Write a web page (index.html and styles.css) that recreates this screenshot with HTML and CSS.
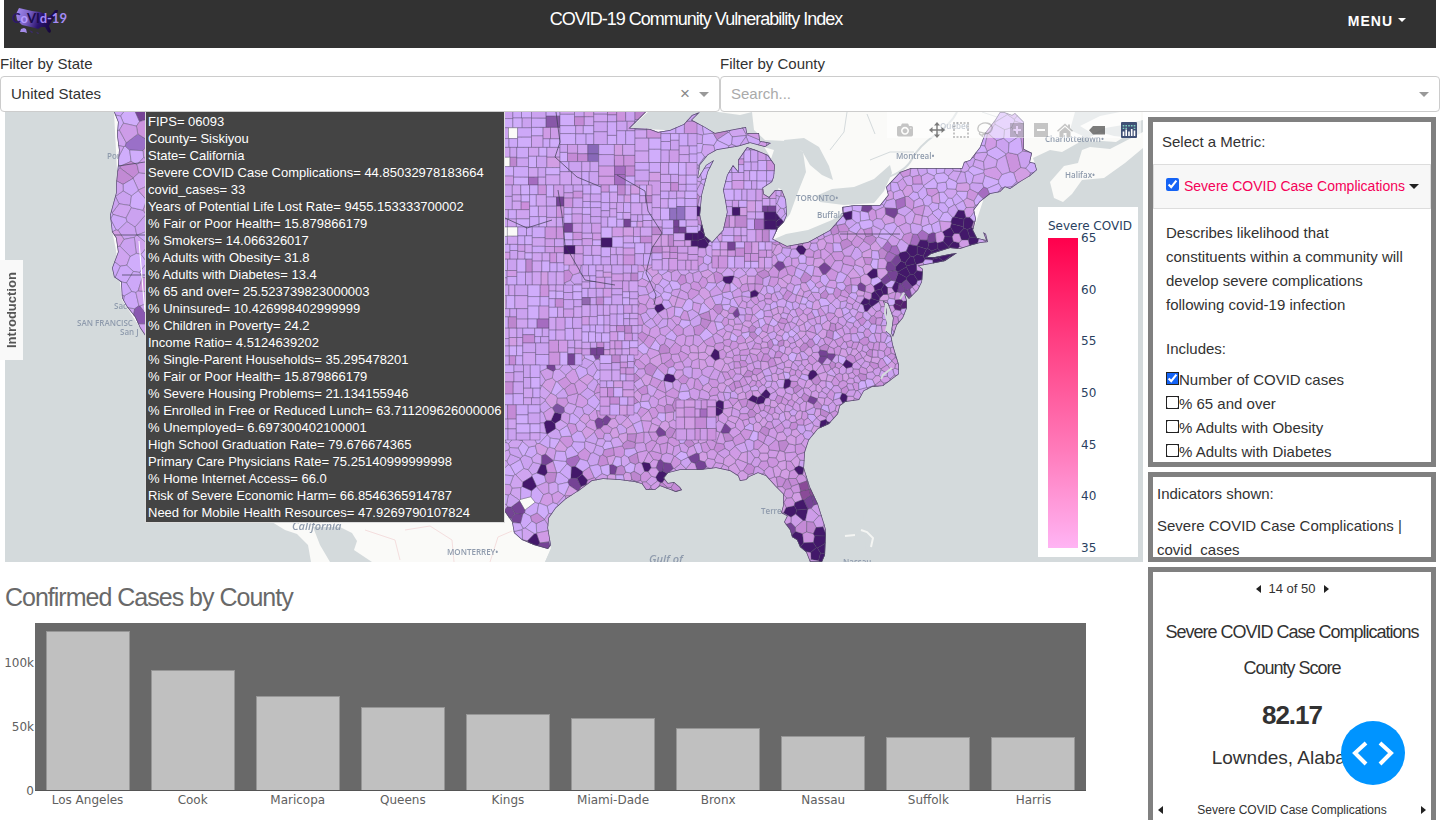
FILE: index.html
```html
<!DOCTYPE html>
<html lang="en">
<head>
<meta charset="utf-8">
<title>COVID-19 Community Vulnerability Index</title>
<link rel="stylesheet" href="styles.css">
</head>
<body>
<div class="shell">
  <header class="topbar">
    <svg class="logo" viewBox="0 0 60 32" role="img" aria-label="CoVId-19">
      <defs><linearGradient id="lg" x1="0" x2="1" y1="0" y2=".25"><stop offset="0" stop-color="#a890f4"/><stop offset=".35" stop-color="#7a60c4"/><stop offset=".65" stop-color="#2c1470"/><stop offset="1" stop-color="#150638"/></linearGradient></defs>
      <path fill="url(#lg)" d="M7 2l13 3 8 1 5 2 3 3 4-3 3-4 3 0-1 4-3 4-3 4-2 4 2 5-1 2-2-1-3-5-4 0-3 2-3-1-13-3-5-5-1-6z"/>
      <path fill="#a48bea" d="M8 26l1-3 3-1 2 1 1 4-3-1z"/><path fill="#3e2a80" d="M17 24l4 2-1 1zM24 26l3 1-1 1z"/>
      <text class="logo-text" x="0" y="17"><tspan fill="#2c1866">C</tspan><tspan fill="#b49cff">o</tspan><tspan fill="#1b0b4a">VI</tspan><tspan fill="#a48bf5">d-19</tspan></text>
    </svg>
    <h1 class="title">COVID-19 Community Vulnerability Index</h1>
    <button class="menu" type="button">MENU<span class="caret-light"></span></button>
  </header>

  <section class="filters">
    <div class="filter">
      <label for="state">Filter by State</label>
      <div class="select-wrap">
        <select id="state"><option>United States</option></select>
        <button class="clear" type="button" aria-label="Clear">×</button>
        <span class="caret"></span>
      </div>
    </div>
    <div class="filter">
      <label for="county">Filter by County</label>
      <div class="select-wrap">
        <select id="county" class="empty"><option>Search...</option></select>
        <span class="caret"></span>
      </div>
    </div>
  </section>

  <main class="content">
    <div class="left">
      <div class="map">
        <svg class="map-art" viewBox="5 112 1138 450" preserveAspectRatio="xMinYMin slice" aria-label="County map">
          <defs>
            <clipPath id="us">
              <path d="M114 108L114 112L118 122 117 135 119 150 118 165 116 185 116 193 110 215 112 232 116 238 118 252 112 268 114 277 121 282 122 298 127 307 135 317 140 328 148 340 260 500 505 512 512 522 514 533 522 540 534 545 548 549 551 545 548 528 549 518 556 508 566 499 580 490 592 481 603 479 620 480 635 482 642 484 646 490 655 490 660 486 668 489 676 492 682 490 680 487 674 482 668 483 664 478 668 473 680 470 700 470 716 468 730 471 738 476 740 481 746 480 749 477 758 473 766 476 775 486 783 494 783 506 781 513 787 516 784 522 790 530 792 537 797 540 800 547 806 552 810 562 822 562 825 555 826 530 824 523 818 504 810 487 804 468 805 452 809 440 818 429 829 424 838 414 840 406 845 402 859 400 864 391 872 387 883 386 899 374 899 365 893 345 891 335 887 332 887 310 884 302 888 304 893 318 891 333 893 337 897 325 903 318 907 308 907 301 905 294 909 299 918 290 922 282 923 269 919 266 930 264 945 261 957 253 950 254 935 257 927 257 931 254 950 248 960 249 972 245 980 243 988 242 986 234 983 232 986 240 977 238 973 230 976 219 974 210 980 202 990 194 1000 192 1005 187 1010 189 1020 182 1030 176 1037 170 1035 163 1030 162 1032 153 1024 149 1024 122 1015 113 1012 115 1004 112 1000 112 995 120 985 133 980 147 970 160 964 162 962 168 911 168 900 172 886 187 888 195 880 205 855 205 842 207 843 215 830 230 808 242 787 246 773 239 778 228 784 222 787 215 786 200 782 190 775 190 769 197 764 194 763 188 772 182 774 177 775 165 768 155 756 150 747 147 738 160 738 171 733 165 727 175 723 190 725 200 727 212 723 230 712 242 705 236 700 215 702 195 708 172 714 160 706 165 698 178 700 165 708 155 717 150 735 147 740 146 750 143 765 147 771 143 760 141 759 133 747 133 746 127 735 129 715 133 705 127 692 120 700 112 692 115 684 124 670 130 658 132 650 129 630 128 640 118 650 108Z"/>
            </clipPath>
            <filter id="soft"><feGaussianBlur stdDeviation=".6"/></filter>
          </defs>
          <rect x="5" y="112" width="1138" height="450" fill="#d4dadc"/>
          <g fill="#fafaf8">
            <path d="M114 112L118 190 112 230 116 250 122 300 148 340 272 522 285 530 297 534 308 545 311 562 330 562 320 545 313 527 340 527 352 533 357 541 354 550 372 562 545 562 551 549 547 520 700 400 930 250 975 225 985 195 1037 170 1033 158 1050 150 1062 152 1078 143 1083 136 1070 130 1075 112Z"/>
            <path d="M1050 182L1064 166 1078 163 1082 150 1090 147 1110 149 1143 132 1143 148 1125 163 1104 178 1082 180 1072 194 1063 202 1054 198ZM1088 138l12-6 14 4 10 1-8 5-14-1-12 1z"/>
            <path d="M1080 126l20-10 20-4 23 0v8l-20 5-18 3-12 6z"/>
          </g>
          <g fill="#d4dadc">
            <path d="M648 112H694L718 112 740 115 752 112 754 130 765 140 786 141 803 152 806 172 798 192 790 214 784 222 782 190 764 180 774 150 715 133 630 128Z"/>
            <path d="M715 133L760 140 775 165 780 200 770 200 712 244 696 225 700 160Z"/>
            <path d="M784 140l20-2 15 9 10 19 4 14-11-5-12-10-8-14-16-4zM772 240l14-6 22-4 24-10 10-6 8 6-30 20-34 10zM816 196l16-7 22-2 20-8 16-14 2 8-8 18-10 12-30 2-24-3z"/>
            <path d="M545 562l6-14-4-32 40-42 90-20 120 20 60-40 10 128z"/>
          </g>
          <g fill="none" stroke="#d4dadc"><path stroke-width="2" d="M885 178q20-6 27-19t23-24 22-23"/><path d="M870 160l20-8 24 0M1000 118l-18-6M830 150l14-18 3-20M875 134l-8-20"/></g>
          <g fill="none" stroke="#f4dede"><path d="M365 530l30 10 5 20M405 530l25-4 22 14 2 22M490 562l8-25 14-6"/></g>
          <path fill="none" stroke="#f4f5f3" stroke-width="2" d="M845 536l10-1m6-5l6 2 6 6-2 9"/>
          <g class="base-labels" filter="url(#soft)">
            <text x="107" y="159">Portland</text><text x="114" y="309">Sac</text><text x="77" y="326">SAN FRANCISC</text><text x="120" y="335">San J</text>
            <text x="292" y="530" class="big">California</text><text x="447" y="555">MONTERREY•</text><text x="896" y="159">Montreal•</text><text x="1045" y="142">Charlottetown•</text>
            <text x="1065" y="178">Halifax•</text><text x="796" y="201">TORONTO•</text><text x="817" y="218">Buffalo</text><text x="761" y="514">Terres</text><text x="940" y="129">Quebec</text>
            <text x="649" y="563" class="big">Gulf of</text><text x="843" y="565">Nassau</text>
          </g>
          <g id="counties" clip-path="url(#us)"></g>
          <path d="M139 241L143 290 145 312" stroke="#fff" fill="none"/>
          <path class="bay" d="M886 303l-1 10 3 10-2 8M892 368l-9 7-2 4M900 299l4-6" />
        </svg>

        <div class="modebar">
          <button type="button" aria-label="Download plot"><svg viewBox="0 0 1000 1000"><path transform="matrix(1 0 0 -1 0 850)" d="m500 450c-83 0-150-67-150-150 0-83 67-150 150-150 83 0 150 67 150 150 0 83-67 150-150 150z m400 150h-120c-16 0-34 13-39 29l-31 93c-6 15-23 28-40 28h-340c-16 0-34-13-39-28l-31-94c-6-15-23-28-40-28h-120c-55 0-100-45-100-100v-450c0-55 45-100 100-100h800c55 0 100 45 100 100v450c0 55-45 100-100 100z m-400-550c-138 0-250 112-250 250 0 138 112 250 250 250 138 0 250-112 250-250 0-138-112-250-250-250z m365 380c-19 0-35 16-35 35 0 19 16 35 35 35 19 0 35-16 35-35 0-19-16-35-35-35z"/></svg></button>
          <span class="group">
            <button type="button" class="on" aria-label="Pan"><svg viewBox="0 0 16 16"><path d="M8 0l3 3.500H8.700V7.300H12.500V5L16 8l-3.500 3V8.700H8.700v3.800H11L8 16l-3-3.500h2.300V8.700H3.500V11L0 8l3.500-3v2.300h3.800V3.500H5z"/></svg></button>
            <button type="button" aria-label="Box select"><svg viewBox="0 0 16 16"><path d="M0 0h2v2H0zM3.500 0h2v2h-2zM7 0h2v2H7zM10.500 0h2v2h-2zM14 0h2v2h-2zM0 3.500h2v2H0zM14 3.500h2v2h-2zM0 7h2v2H0zM14 7h2v2h-2zM0 10.500h2v2H0zM14 10.500h2v2h-2zM0 14h2v2H0zM3.500 14h2v2h-2zM7 14h2v2H7zM10.500 14h2v2h-2zM14 14h2v2h-2z"/></svg></button>
            <button type="button" aria-label="Lasso select"><svg viewBox="0 0 16 16"><path fill="none" stroke="currentColor" stroke-width="1.300" d="M3 10.500C0 9 0 4 4 2s10-1 11 3-3 7-7 6.500M8 11.500C5 11 3 9 2.500 11s3 3 4.500 1 2-1 0-.5c-2 1-1 2-2 3.500"/></svg></button>
          </span>
          <span class="group">
            <button type="button" aria-label="Zoom in"><svg viewBox="0 0 16 16"><path fill-rule="evenodd" d="M1 1h14v14H1zM7 4v3H4v2h3v3h2V9h3V7H9V4z"/></svg></button>
            <button type="button" aria-label="Zoom out"><svg viewBox="0 0 16 16"><path fill-rule="evenodd" d="M1 1h14v14H1zM4 7v2h8V7z"/></svg></button>
            <button type="button" aria-label="Reset view"><svg viewBox="0 0 16 16"><path d="M8 1.500l3 2.700V2.500h2V6l3 2.700-1 1L8 3.500 1 9.700l-1-1zM8 5l5.500 4.700V15h-4v-4h-3v4h-4V9.700z"/></svg></button>
          </span>
          <button type="button" class="on" aria-label="Toggle hover"><svg viewBox="0 0 16 16"><path d="M0 8.300L4 4h12v8.500H4z"/></svg></button>
          <button type="button" class="brand" aria-label="Plotly"><svg viewBox="0 0 16 16"><rect width="16" height="16" rx="1" fill="#3f4f75"/><path stroke="#80cfbe" stroke-width="1.600" stroke-dasharray="1.500 1.300" d="M2.500 3v4M5.200 3v4M8 3v2M10.700 3v2M13.500 3v4"/><path stroke="#fff" stroke-width="1.600" d="M2.500 9.500V14M5.200 7.500V14M8 9.500V14M10.700 7V14M13.500 8.500V14"/></svg></button>
        </div>

        <div class="tooltip">FIPS= 06093<br>County= Siskiyou<br>State= California<br>Severe COVID Case Complications= 44.85032978183664<br>covid_cases= 33<br>Years of Potential Life Lost Rate= 9455.153333700002<br>% Fair or Poor Health= 15.879866179<br>% Smokers= 14.066326017<br>% Adults with Obesity= 31.8<br>% Adults with Diabetes= 13.4<br>% 65 and over= 25.523739823000003<br>% Uninsured= 10.426998402999999<br>% Children in Poverty= 24.2<br>Income Ratio= 4.5124639202<br>% Single-Parent Households= 35.295478201<br>% Fair or Poor Health= 15.879866179<br>% Severe Housing Problems= 21.134155946<br>% Enrolled in Free or Reduced Lunch= 63.711209626000006<br>% Unemployed= 6.697300402100001<br>High School Graduation Rate= 79.676674365<br>Primary Care Physicians Rate= 75.25140999999998<br>% Home Internet Access= 66.0<br>Risk of Severe Economic Harm= 66.8546365914787<br>Need for Mobile Health Resources= 47.9269790107824</div>

        <div class="legend">
          <div class="legend-title">Severe COVID</div>
          <div class="legend-body">
            <div class="ramp"></div>
            <div class="ramp-ticks"><span>65</span><span>60</span><span>55</span><span>50</span><span>45</span><span>40</span><span>35</span></div>
          </div>
        </div>
      </div>

      <section class="cases">
        <h2>Confirmed Cases by County</h2>
        <div class="chart">
          <div class="y-axis"><span>100k</span><span>50k</span><span>0</span></div>
          <div class="plot">
            <div class="bar" style="height:95.5%"></div><div class="bar" style="height:72%"></div><div class="bar" style="height:56%"></div><div class="bar" style="height:50%"></div><div class="bar" style="height:45.8%"></div><div class="bar" style="height:43%"></div><div class="bar" style="height:37%"></div><div class="bar" style="height:32.3%"></div><div class="bar" style="height:32%"></div><div class="bar" style="height:31.5%"></div>
          </div>
          <div class="x-axis"><span>Los Angeles</span><span>Cook</span><span>Maricopa</span><span>Queens</span><span>Kings</span><span>Miami-Dade</span><span>Bronx</span><span>Nassau</span><span>Suffolk</span><span>Harris</span></div>
        </div>
      </section>
    </div>

    <aside class="side">
      <section class="panel metrics">
        <p class="metric-heading">Select a Metric:</p>
        <details open>
          <summary><input type="checkbox" id="severe" checked><label for="severe">Severe COVID Case Complications</label><span class="caret-dark"></span></summary>
          <div class="detail">
            <p>Describes likelihood that constituents within a community will develop severe complications following covid-19 infection</p>
            <p>Includes:</p>
            <div class="checks">
              <label><input type="checkbox" checked>Number of COVID cases</label>
              <label><input type="checkbox">% 65 and over</label>
              <label><input type="checkbox">% Adults with Obesity</label>
              <label><input type="checkbox">% Adults with Diabetes</label>
            </div>
          </div>
        </details>
      </section>
      <section class="panel indicators">
        <p>Indicators shown:</p>
        <p>Severe COVID Case Complications | covid_cases</p>
      </section>
      <section class="panel score">
        <div class="pager"><button type="button" class="prev" aria-label="Previous county"></button><span>14 of 50</span><button type="button" class="next" aria-label="Next county"></button></div>
        <h3>Severe COVID Case Complications County Score</h3>
        <strong>82.17</strong>
        <p class="place">Lowndes, Alabama</p>
        <div class="metric-pager"><button type="button" class="prev" aria-label="Previous metric"></button><span>Severe COVID Case Complications</span><button type="button" class="next" aria-label="Next metric"></button></div>
      </section>
    </aside>
  </main>
</div>
<button class="intro" type="button">Introduction</button>
<button class="dev" type="button" aria-label="Debug tools"><svg viewBox="0 0 64 64"><path fill="none" stroke="#fff" stroke-width="4" d="M25 22L14 32l11 11M39 22l11 10-11 11"/></svg></button>
<script src="map.js"></script>
</body>
</html>
```
FILE: styles.css
```css
* { box-sizing: border-box; }
body { margin: 0; background: #fff; color: #323232; font: 15px/24px "Liberation Sans", Arial, sans-serif; }
button { border: 0; padding: 0; background: none; font: inherit; color: inherit; cursor: pointer; }
p, h1, h2, h3 { margin: 0; font-weight: 400; }
.shell { height: 100vh; overflow: hidden; display: flex; flex-direction: column; }

.topbar { flex: none; height: 48px; margin: 0 4px; padding: 0 30px 0 8px; background: #323232; color: #fff; display: grid; grid-template-columns: 60px 1fr 86px; align-items: start; }
.logo { width: 60px; height: 32px; margin-top: 6px; }
.logo-text { font: bold 13px Lato, sans-serif; }
.title { font-size: 18px; line-height: 38px; letter-spacing: -1px; text-align: center; }
.menu { justify-self: end; font-size: 14px; font-weight: 700; line-height: 42px; letter-spacing: 1px; display: flex; align-items: center; gap: 5px; }
.caret-light { margin-bottom: 3px; border: 4px solid transparent; border-top-color: #fff; border-bottom: 0; }

.filters { flex: none; display: grid; grid-template-columns: 1fr 1fr; padding-top: 4px; }
.filter > label { display: block; }
.select-wrap { position: relative; }
select { appearance: none; display: block; width: 100%; height: 36px; padding: 0 10px; border: 1px solid #ccc; border-radius: 4px; background: #fff; color: #323232; font: inherit; }
select.empty { color: #aaa; }
.caret { position: absolute; right: 11px; top: 16px; border: 5px solid transparent; border-top-color: #999; border-bottom: 0; pointer-events: none; }
.clear { position: absolute; right: 30px; top: 6px; color: #888; font-size: 17px; }

.content { flex: 1; min-height: 0; display: flex; gap: 5px; padding: 0 4px 0 5px; }
.left { flex: 1; min-width: 0; }
.map { position: relative; height: 450px; overflow: hidden; }
.map-art { display: block; width: 100%; height: 100%; }
.base-labels { fill: #8f9bad; font: 600 8px "Open Sans", sans-serif; }
.base-labels .big { font-size: 11px; font-style: italic; }
.bay { fill: none; stroke: #d4dadc; stroke-width: 2; }

.modebar { position: absolute; top: 0; right: 2px; height: 26px; padding: 10px 4px 0 10px; display: flex; gap: 16px; background: rgba(255, 255, 255, .5); color: rgba(68, 68, 68, .3); }
.modebar .group { display: flex; gap: 8px; }
.modebar button { width: 16px; height: 16px; }
.modebar .on { color: rgba(68, 68, 68, .7); }
.modebar svg { display: block; width: 16px; height: 16px; fill: currentColor; }

.tooltip { position: absolute; left: 140px; top: 0; padding: 1px 2px; border: 1px solid #ddd; border-top: 0; background: #444; color: #fff; font-size: 13px; line-height: 17px; white-space: nowrap; }

.legend { position: absolute; right: 5px; top: 95px; width: 100px; height: 350px; padding: 12px 2px 0 10px; background: #fff; color: #2a3f5f; font: 12px/14px "DejaVu Sans", Verdana, sans-serif; }
.legend-title { white-space: nowrap; margin-bottom: 5px; }
.legend-body { display: flex; gap: 3px; }
.ramp { width: 30px; height: 310px; background: linear-gradient(#ff004c, #ff4084 34%, #ff78b8 67%, #ffb4f4); }
.ramp-ticks { display: flex; flex-direction: column; justify-content: space-between; height: 324px; margin: -7px 0; }

.cases h2 { padding: 17px 0 7px; font-size: 25px; line-height: 37px; letter-spacing: -1px; color: #696969; }
.chart { display: grid; grid-template-columns: 30px 1fr; margin-right: 57px; font: 12px/14px "DejaVu Sans", Verdana, sans-serif; color: #606060; }
.y-axis { display: flex; flex-direction: column; align-items: flex-end; gap: 50px; padding: 33px 1px 0 0; height: 168px; }
.plot { display: grid; grid-template-columns: repeat(10, 1fr); align-items: end; justify-items: center; height: 168px; background: #696969; border-bottom: 1px solid #555; }
.bar { width: 80%; background: #c0c0c0; border: 1px solid #969696; border-bottom: 0; }
.x-axis { grid-column: 2; display: grid; grid-template-columns: repeat(10, 1fr); text-align: center; padding-top: 2px; }

.side { flex: none; width: 288px; padding-top: 5px; display: flex; flex-direction: column; gap: 5px; }
.panel { border: 5px solid #808080; overflow: hidden; background: #fff; }
.metrics { flex: none; height: 350px; }
.metric-heading { padding: 8px 9px 10px; }
.metrics summary { height: 45px; padding: 0 12px; background: #f7f7f7; border: 1px solid #ddd; display: flex; align-items: center; white-space: nowrap; font-size: 14px; }
.metrics summary label { color: #f50057; margin: 0 4px 2px 5px; }
.metrics summary input { width: 13px; height: 13px; margin: 0 0 5px; flex: none; }
input { accent-color: #1463f5; }
.caret-dark { border: 5px solid transparent; border-top-color: #222; border-bottom: 0; }
.detail { padding: 12px 22px 0 13px; }
.detail p { margin-bottom: 20px; }
.detail p + p { margin-bottom: 7px; }
.checks label { display: flex; align-items: center; }
.checks input { width: 13px; height: 13px; margin: 0 0 3px; border-radius: 2px; outline: 1px solid #222; outline-offset: -1px; }
.indicators { flex: none; height: 90px; padding: 5px 4px 0; }
.indicators p { margin-bottom: 8px; }
.score { flex: 1; border-bottom: 0; padding: 5px 5px 0; display: flex; flex-direction: column; text-align: center; min-height: 0; }
.pager, .metric-pager { display: flex; align-items: center; justify-content: center; gap: 8px; font-size: 13px; }
.metric-pager { justify-content: space-between; font-size: 12px; }
.prev, .next { border: 4px solid transparent; width: 0; height: 0; }
.prev { border-right: 5px solid #222; border-left: 0; }
.next { border-left: 5px solid #222; border-right: 0; }
.score h3 { margin-top: 13px; font-size: 18px; line-height: 36px; letter-spacing: -1px; }
.score strong { margin-top: 11px; font-size: 26px; line-height: 36px; letter-spacing: -1px; }
.place { margin: 7px 0 22px; font-size: 19px; line-height: 36px; }

.intro { position: fixed; left: 0; top: 260px; width: 23px; height: 100px; writing-mode: vertical-rl; transform: rotate(180deg); background: #f9f9f9; color: #555; font-size: 13px; font-weight: 700; line-height: 23px; }
.dev { position: fixed; right: 35px; bottom: 35px; width: 64px; height: 64px; border-radius: 50%; background: #0094ff; }
.dev svg { display: block; }
```
FILE: map.js
```js
(function () {
  var seed = 7;
  function rnd() { seed = (seed * 1664525 + 1013904223) % 4294967296; return seed / 4294967296; }

  // [x, y, radius, colour]
  var D = '#43186a', M = '#754395', L = '#a56cc0', W = '#fafaf8';
  var hot = [
    [611,167,5,D],[617,175,6,L],[592,155,8,'#8868b8'],[549,122,7,'#8858a8'],[557,198,6,M],[569,226,6,M],[567,250,4,D],[608,241,5,D],
    [628,224,5,M],[533,181,5,L],[701,236,10,D],[695,238,7,D],[706,247,6,D],[699,212,4,D],[676,211,6,'#9070c0'],[679,227,5,M],[698,180,4,M],
    [737,212,6,D],[775,219,8,D],[775,229,6,D],[767,211,6,M],[757,229,6,L],[732,242,5,M],[745,254,4,M],[728,281,3,D],[778,278,4,D],[776,265,4,M],
    [754,294,4,D],[736,315,4,M],[799,246,5,D],[826,267,5,M],[659,305,4,D],[666,310,4,M],[585,300,4,'#9268b0'],[545,325,5,L],
    [846,217,6,D],[864,209,5,M],[888,212,5,M],[899,208,6,L],[965,225,11,D],[972,237,7,D],[958,215,6,M],[947,235,6,D],[940,243,6,D],
    [919,253,11,D],[927,248,10,D],[908,262,11,D],[915,276,10,D],[890,275,8,M],[895,266,7,M],[875,272,6,D],[945,257,14,D],[904,272,10,D],[898,284,5,D],
    [876,297,8,D],[869,303,7,D],[880,289,6,D],[901,304,6,'#542070'],[866,290,5,M],[866,329,4,M],[905,290,6,M],[890,253,6,L],
    [982,193,6,L],[928,240,6,M],[917,236,7,L],
    [598,350,5,M],[597,359,4,M],[571,357,4,M],[547,368,5,M],[667,375,4,D],[717,356,4,D],[722,361,4,M],[758,400,6,D],[763,395,4,D],
    [716,407,5,D],[705,411,5,L],[789,381,4,D],[813,373,4,D],[811,398,5,M],[823,358,5,M],[849,362,4,D],[842,398,4,D],[825,424,6,D],[829,355,4,M],
    [553,421,7,D],[556,413,6,'#7c52a0'],[604,424,5,M],[658,431,4,M],[631,427,4,M],[728,432,4,M],[696,462,6,M],[665,466,5,M],[648,463,4,D],[665,475,5,D],
    [541,468,6,D],[545,460,6,M],[529,484,5,D],[578,475,6,D],[585,483,6,D],[577,487,7,M],[572,463,6,L],[598,476,5,M],[612,470,5,M],[626,452,5,L],
    [543,515,5,D],[534,540,6,D],[545,544,5,M],[516,516,8,M],[800,467,5,D],[808,492,8,'#8a4b98'],[812,500,7,M],[788,512,9,D],[802,511,7,D],
    [798,540,7,D],[808,548,8,D],[820,534,7,D],[820,546,9,D],[820,556,9,D],[789,525,6,M],[708,460,3,M],
    [513,134,6,W],[506,166,5,W],[508,231,7,W],[528,236,4,W],[566,274,3,W],[528,298,6,W],[527,504,5,W],[816,292,2,W],
    [134,150,7,'#9a70c8'],[138,168,6,M],[142,116,5,M],[138,312,9,'#8a58b0'],[120,176,6,'#c28ad4'],[527,209,6,'#cc8edc']
  ];
  var cool = ['#d0adfb', '#cda8f8', '#cfa4f0', '#cba2f0'];
  var warm = ['#d09be6', '#cb93de', '#cd9ce8', '#d29ee4'];
  var dusky = ['#bd86cf', '#c48ad6'];

  function colour(x, y) {
    var i, h;
    for (i = 0; i < hot.length; i++) { h = hot[i]; if (Math.hypot(x - h[0], y - h[1]) < h[2]) return h[3]; }
    var heat = .25 + (x > 640 && y > 235 ? .35 : 0) + (y > 340 ? .25 : 0);
    if (x < 545) heat = .12;
    var k = rnd(), set = k < heat ? warm : cool;
    if (rnd() < (x > 600 && y > 220 ? .1 : .03)) set = dusky;
    return set[Math.floor(rnd() * set.length)];
  }

  var out = [];
  function poly(p) {
    var x = 0, y = 0;
    p.forEach(function (q) { x += q[0]; y += q[1]; });
    out.push('<path fill="' + colour(x / p.length, y / p.length) + '" d="M' + p.map(function (q) { return q[0].toFixed(1) + ' ' + q[1].toFixed(1); }).join('L') + 'Z"/>');
  }

  // Irregular cells: spaced random seeds, each cell cut by its neighbours' bisectors
  function spacing(x, y) {
    if (x < 200) return 11;
    if (y > 500) return 8;
    if (x > 980 && y < 190) return 10;
    if (x > 850 && y < 260) return 7;
    if (x > 725 && y > 285 && y < 425) return 5;
    if (y < 200) return 8.5;
    return x < 600 ? 7.5 : 6.5;
  }
  var pts = [], grid = {};
  function near(x, y, r) {
    var a = [], i, j, n = Math.ceil(r / 16), cx = Math.floor(x / 16), cy = Math.floor(y / 16);
    for (i = -n; i <= n; i++) for (j = -n; j <= n; j++) a = a.concat(grid[(cx + i) + ',' + (cy + j)] || []);
    return a;
  }
  for (var t = 0; t < 60000; t++) {
    var x = t % 12 === 0 ? 100 + rnd() * 60 : 500 + rnd() * 550, y = 105 + rnd() * 465, s = spacing(x, y);
    if (near(x, y, s).every(function (q) { return Math.hypot(q[0] - x, q[1] - y) > s; })) {
      var p = [x, y], key = Math.floor(x / 16) + ',' + Math.floor(y / 16);
      pts.push(p); (grid[key] = grid[key] || []).push(p);
    }
  }
  pts.forEach(function (c) {
    var cell = [[c[0] - 20, c[1] - 20], [c[0] + 20, c[1] - 20], [c[0] + 20, c[1] + 20], [c[0] - 20, c[1] + 20]];
    near(c[0], c[1], 32).forEach(function (o) {
      if (o === c) return;
      var dx = o[0] - c[0], dy = o[1] - c[1], m = (o[0] * o[0] + o[1] * o[1] - c[0] * c[0] - c[1] * c[1]) / 2, next = [];
      cell.forEach(function (a, i) {
        var b = cell[(i + 1) % cell.length], da = a[0] * dx + a[1] * dy - m, db = b[0] * dx + b[1] * dy - m;
        if (da <= 0) next.push(a);
        if (da * db < 0) { var k = da / (da - db); next.push([a[0] + (b[0] - a[0]) * k, a[1] + (b[1] - a[1]) * k]); }
      });
      cell = next;
    });
    if (cell.length > 2) poly(cell);
  });

  // Squared-off survey counties of the plains and the Midwest
  function split(x, y, w, h, size) {
    if (w <= size * 1.5 && h <= size * 1.5) { poly([[x, y], [x + w, y], [x + w, y + h], [x, y + h]]); return; }
    var k = .4 + rnd() * .2;
    if (w > h) { split(x, y, w * k, h, size); split(x + w * k, y, w * (1 - k), h, size); }
    else { split(x, y, w, h * k, size); split(x, y + h * k, w, h * (1 - k), size); }
  }
  split(500, 105, 60, 80, 11);
  split(560, 105, 75, 80, 11);
  split(635, 105, 62, 115, 10);
  split(500, 185, 64, 100, 9);
  split(564, 185, 88, 80, 8);
  split(500, 285, 82, 80, 9);
  split(582, 265, 56, 90, 8);
  split(500, 365, 40, 75, 10);
  split(652, 220, 46, 50, 8);
  split(722, 150, 54, 92, 8.500);
  split(712, 242, 60, 26, 8);
  split(600, 355, 34, 60, 8);
  split(676, 400, 40, 40, 8);

  document.getElementById('counties').innerHTML =
    '<g stroke="#4c4560" stroke-opacity=".6" stroke-width=".6" stroke-linejoin="round">' + out.join('') + '</g>' +
    '<g fill="none" stroke="#3c3c50" stroke-width=".7"><path d="M556 112l4 30-5 15 22 20 24 10M617 175l28 16 3 20 14 22-10 15-6 25 10 22-2 10M558 190l4 25 3 30 20 35 30 5M505 218l22 10 25-8M840 234H900M118 166l27-4M114 235h31M122 275h23"/></g>' +
    '<path fill="none" stroke="#55506a" stroke-width="1.400" d="' + document.querySelector('#us path').getAttribute('d') + '"/>';
})();
```
